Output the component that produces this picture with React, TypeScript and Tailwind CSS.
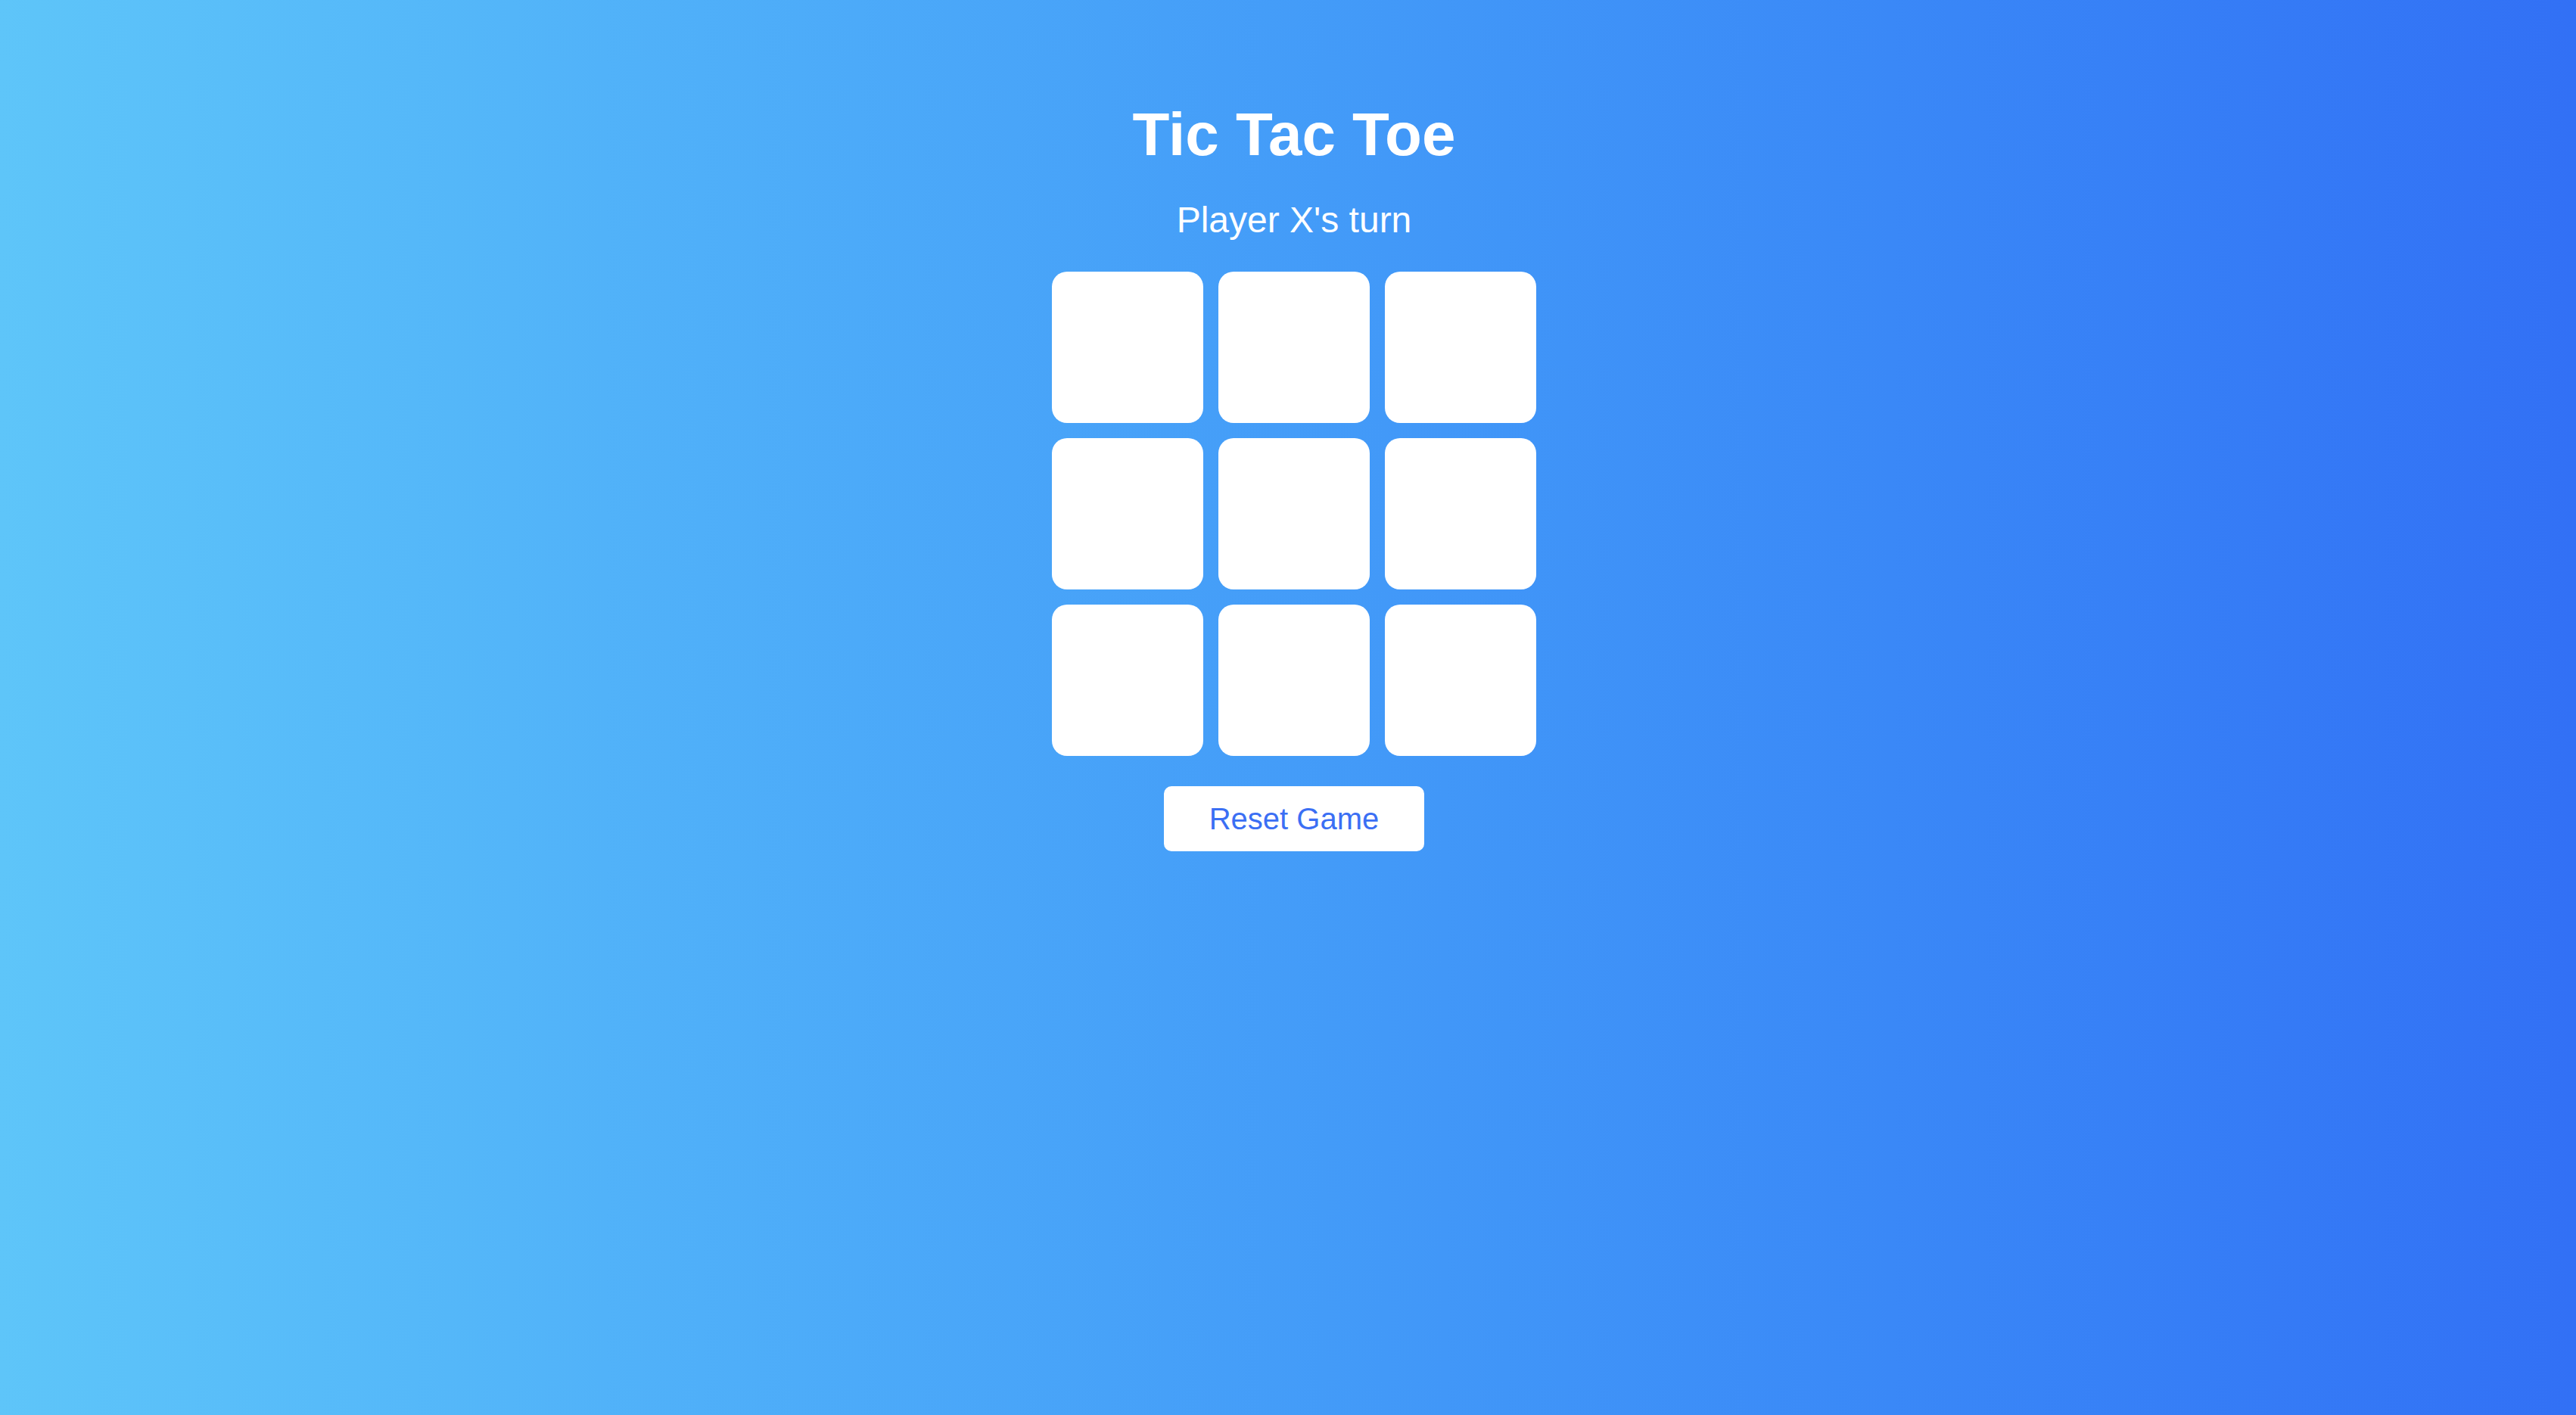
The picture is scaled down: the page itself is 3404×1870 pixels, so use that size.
import React, { useState } from 'react';

type Cell = 'X' | 'O' | null;

export default function App() {
  const [board, setBoard] = useState<Cell[]>(Array(9).fill(null));
  const [xNext, setXNext] = useState(true);

  const play = (i: number) => {
    if (board[i]) return;
    const next = board.slice();
    next[i] = xNext ? 'X' : 'O';
    setBoard(next);
    setXNext(!xNext);
  };

  const reset = () => {
    setBoard(Array(9).fill(null));
    setXNext(true);
  };

  return (
    <div
      className="min-h-screen w-full bg-gradient-to-r from-[#5ec5f9] to-[#3270f5] pl-4 text-white"
      style={{ fontFamily: '"Liberation Sans", Arial, sans-serif' }}
    >
      <div className="flex flex-col items-center pt-[138px]">
        {/* Header */}
        <h1 className="text-[80px] font-bold leading-none">Tic Tac Toe</h1>
        <p className="mt-[49px] text-[48px] leading-none">
          Player {xNext ? 'X' : 'O'}'s turn
        </p>

        {/* Board */}
        <div className="mt-[44px] grid grid-cols-3 gap-[20px]">
          {board.map((cell, i) => (
            <button
              key={i}
              onClick={() => play(i)}
              className="flex h-[200px] w-[200px] items-center justify-center rounded-[20px] bg-white text-[110px] font-bold leading-none text-[#3b6ff4]"
            >
              {cell}
            </button>
          ))}
        </div>

        <button
          onClick={reset}
          className="mt-[40px] flex h-[86px] w-[344px] items-center justify-center rounded-[10px] bg-white text-[40px] leading-none text-[#3b6ff4]"
        >
          Reset Game
        </button>
      </div>
    </div>
  );
}
